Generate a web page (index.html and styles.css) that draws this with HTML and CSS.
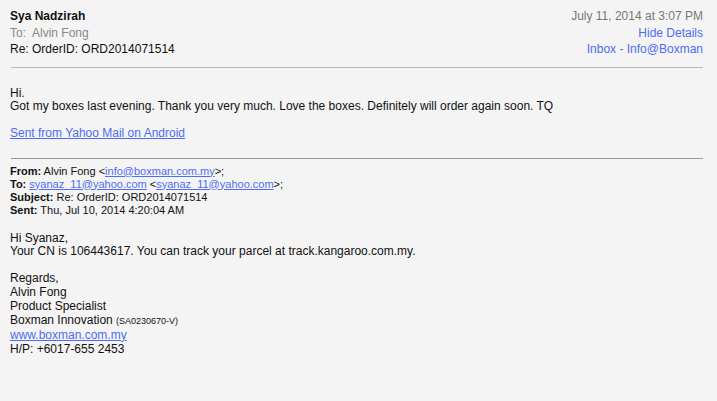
FILE: index.html
```html
<!DOCTYPE html>
<html>
<head>
<meta charset="utf-8">
<link rel="stylesheet" href="styles.css">
</head>
<body>
<div class="mail">
  <header class="head">
    <div class="head-left">
      <div class="sender">Sya Nadzirah</div>
      <div class="to">To:&nbsp; Alvin Fong</div>
      <div class="subject">Re: OrderID: ORD2014071514</div>
    </div>
    <div class="head-right">
      <div class="date">July 11, 2014 at 3:07 PM</div>
      <a class="hlink" href="#">Hide Details</a>
      <a class="hlink" href="#">Inbox - Info@Boxman</a>
    </div>
  </header>
  <hr class="sep sep-top">
  <section class="reply">
    <div class="line">Hi.</div>
    <div class="line">Got my boxes last evening. Thank you very much. Love the boxes. Definitely will order again soon. TQ</div>
    <div class="line blank">&nbsp;</div>
    <div class="line"><a class="link" href="#">Sent from Yahoo Mail on Android</a></div>
  </section>
  <hr class="sep sep-quote">
  <section class="fwd-head">
    <div><b>From:</b> Alvin Fong &lt;<a class="link" href="#">info@boxman.com.my</a>&gt;;</div>
    <div><b>To:</b> <a class="link" href="#">syanaz_11@yahoo.com</a> &lt;<a class="link" href="#">syanaz_11@yahoo.com</a>&gt;;</div>
    <div><b>Subject:</b> Re: OrderID: ORD2014071514</div>
    <div><b>Sent:</b> Thu, Jul 10, 2014 4:20:04 AM</div>
  </section>
  <section class="quote">
    <div class="line">Hi Syanaz,</div>
    <div class="line">Your CN is 106443617. You can track your parcel at track.kangaroo.com.my.</div>
  </section>
  <section class="sig">
    <div>Regards,</div>
    <div>Alvin Fong</div>
    <div>Product Specialist</div>
    <div>Boxman Innovation <span class="reg">(SA0230670-V)</span></div>
    <div><a class="link" href="#">www.boxman.com.my</a></div>
    <div>H/P: +6017-655 2453</div>
  </section>
</div>
</body>
</html>
```
FILE: styles.css
```css
html, body {
  margin: 0;
  padding: 0;
  background: #f4f4f4;
}
body {
  font-family: "Liberation Sans", Arial, Helvetica, sans-serif;
  color: #111;
  font-size: 12px;
}
.mail {
  padding: 8px 14px 0 10px;
}
.head {
  display: flex;
  justify-content: space-between;
  line-height: 16.5px;
}
.sender {
  font-weight: bold;
  color: #111;
}
.to {
  color: #888;
}
.head-right {
  display: flex;
  flex-direction: column;
  align-items: flex-end;
}
.date {
  color: #777;
}
.hlink {
  color: #4f6cf0;
  text-decoration: none;
}
.sep {
  border: 0;
  height: 1px;
  margin: 0;
}
.sep-top {
  background: #b9b9b9;
  margin: 9px 0 0 1px;
}
.sep-quote {
  background: #9a9a9a;
  margin: 17px 0 0 1px;
}
.reply {
  padding-top: 19px;
  line-height: 13.5px;
}
.link {
  color: #4f6cf0;
  text-decoration: underline;
}
.fwd-head {
  padding-top: 6px;
  font-size: 11px;
  line-height: 13px;
}
.fwd-head b {
  font-weight: bold;
}
.quote {
  padding-top: 15px;
  line-height: 13.5px;
}
.sig {
  padding-top: 12px;
  line-height: 14px;
}
.reg {
  font-size: 9px;
}
```
